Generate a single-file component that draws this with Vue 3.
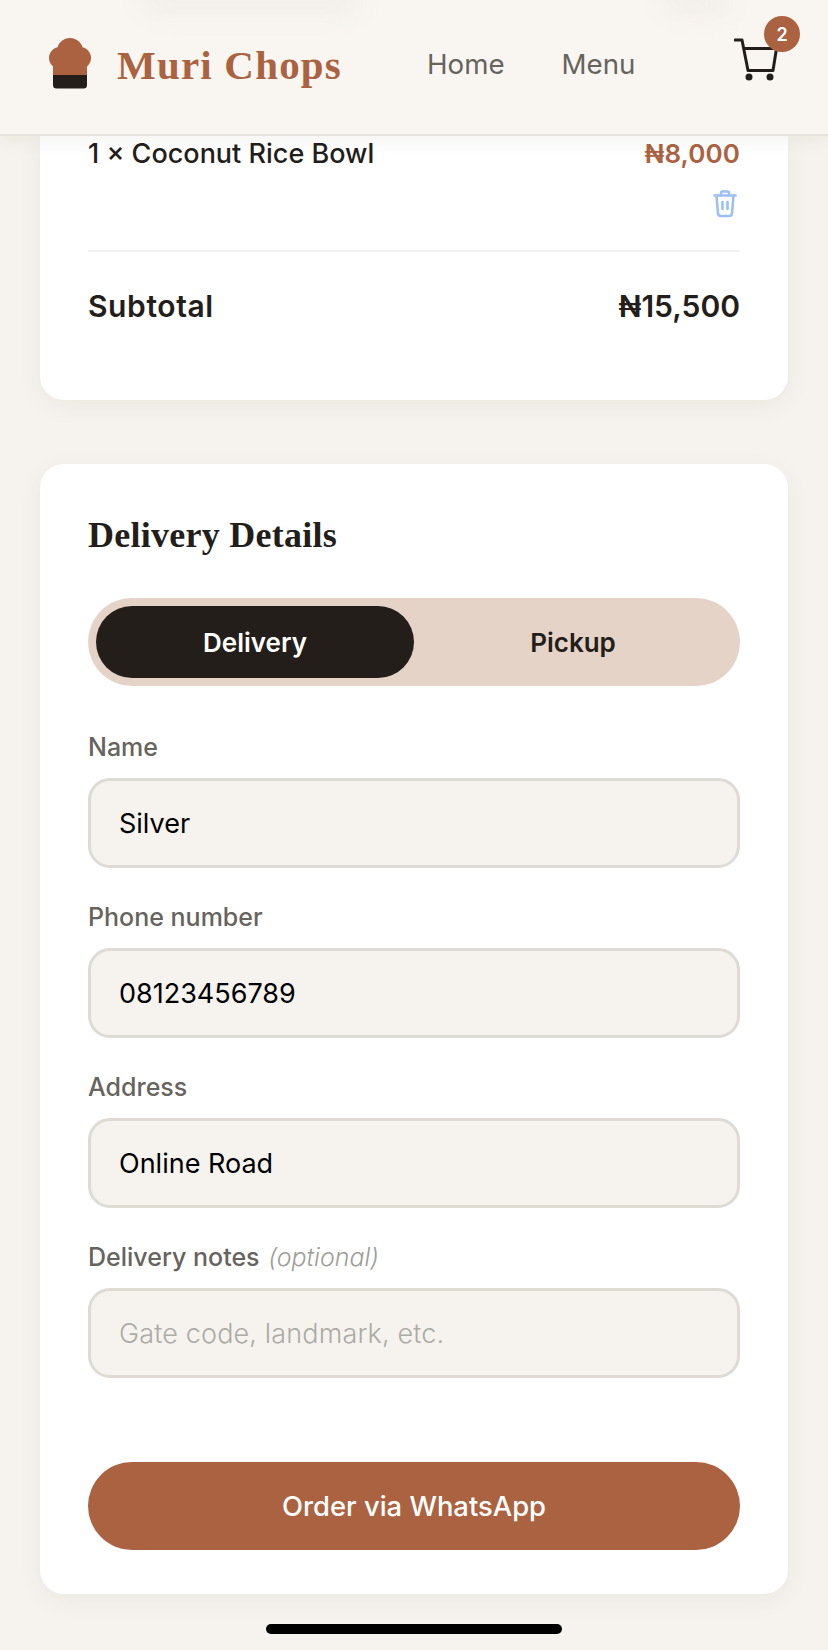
<template>
  <div class="page">
    <header class="topbar">
      <span class="smudge smudge-a"></span>
      <span class="smudge smudge-b"></span>
      <div class="brand">
        <svg class="logo" width="42" height="52" viewBox="0 0 42 52">
          <circle cx="21" cy="14" r="13" fill="#ab6240" />
          <circle cx="11" cy="21" r="11" fill="#ab6240" />
          <circle cx="31" cy="21" r="11" fill="#ab6240" />
          <rect x="4" y="20" width="34" height="20" fill="#ab6240" />
          <path d="M4 38h34v10a3.500 3.500 0 0 1-3.500 3.500h-27A3.500 3.500 0 0 1 4 48z" fill="#231e1a" />
        </svg>
        <span class="brand-name">Muri Chops</span>
      </div>
      <nav class="nav">
        <a>Home</a>
        <a>Menu</a>
      </nav>
      <div class="cart">
        <svg width="44" height="44" viewBox="0 0 44 44" fill="none">
          <path d="M1 2h7l6 30.500h25l3.500-22H10" stroke="#231e1a" stroke-width="3" stroke-linejoin="round" stroke-linecap="round" />
          <circle cx="15" cy="39" r="3.500" fill="#231e1a" />
          <circle cx="36" cy="39" r="3.500" fill="#231e1a" />
        </svg>
        <span class="badge">2</span>
      </div>
    </header>

    <main class="content">
      <section class="card summary">
        <div class="item">
          <span class="item-name">1 × Coconut Rice Bowl</span>
          <div class="item-side">
            <span class="item-price">₦8,000</span>
            <svg class="trash" width="24" height="28" viewBox="0 0 24 28" fill="none" stroke="#9cc0f2" stroke-width="2.600" stroke-linecap="round" stroke-linejoin="round">
              <path d="M1.500 5.500h21" />
              <path d="M8 5.500V3a1.500 1.500 0 0 1 1.500-1.500h5A1.500 1.500 0 0 1 16 3v2.500" />
              <path d="M3.500 5.500l1.500 18a3 3 0 0 0 3 2.500h8a3 3 0 0 0 3-2.500l1.500-18" />
              <path d="M9.500 12v7M14.500 12v7" />
            </svg>
          </div>
        </div>
        <div class="subtotal">
          <span class="subtotal-label">Subtotal</span>
          <span>₦15,500</span>
        </div>
      </section>

      <section class="card details">
        <h2>Delivery Details</h2>
        <div class="toggle">
          <button class="active">Delivery</button>
          <button>Pickup</button>
        </div>
        <div class="field" v-for="f in fields" :key="f.label">
          <label>{{ f.label }} <em v-if="f.optional">(optional)</em></label>
          <input :value="f.value" :placeholder="f.placeholder" readonly />
        </div>
        <button class="order">Order via WhatsApp</button>
      </section>
    </main>

    <div class="home-bar"></div>
  </div>
</template>

<script setup>
const fields = [
  { label: "Name", value: "Silver" },
  { label: "Phone number", value: "08123456789" },
  { label: "Address", value: "Online Road" },
  { label: "Delivery notes", value: "", optional: true, placeholder: "Gate code, landmark, etc." },
];
</script>

<style>
html, body {
  margin: 0;
  background: #f6f3ee;
}
</style>

<style scoped>
.page {
  position: relative;
  width: 828px;
  height: 1650px;
  overflow: hidden;
  background: #f6f3ee;
  font-family: Inter, "Open Sans", sans-serif;
  color: #231e1a;
}
.topbar {
  position: relative;
  z-index: 2;
  height: 134px;
  display: flex;
  align-items: center;
  padding: 0 50px 0 49px;
  background: #f9f6f2;
  border-bottom: 2px solid #e6e3de;
  box-shadow: 0 6px 16px rgba(60, 40, 20, 0.05);
}
.smudge {
  position: absolute;
  top: -16px;
  height: 30px;
  border-radius: 20px;
  background: #f1ede7;
  filter: blur(12px);
}
.smudge-a {
  left: 140px;
  width: 220px;
}
.smudge-b {
  left: 660px;
  width: 70px;
}
.brand {
  display: flex;
  align-items: center;
  gap: 26px;
  width: 378px;
}
.logo {
  margin-top: -8px;
}
.brand-name {
  font-family: "Liberation Serif", serif;
  font-weight: 700;
  font-size: 41px;
  letter-spacing: 1.2px;
  color: #ab6240;
  margin-top: -4px;
}
.nav {
  display: flex;
  gap: 57px;
  font-size: 27.700px;
  font-weight: 400;
  color: #67635d;
  margin-top: -7px;
}
.cart {
  position: relative;
  margin-left: auto;
  width: 44px;
  height: 44px;
  top: -7px;
}
.cart svg {
  display: block;
}
.badge {
  position: absolute;
  top: -22px;
  left: 30px;
  width: 36px;
  height: 36px;
  border-radius: 50%;
  background: #ab6240;
  color: #fff;
  font-size: 18px;
  font-weight: 600;
  display: flex;
  align-items: center;
  justify-content: center;
}
.content {
  display: flex;
  flex-direction: column;
  gap: 64px;
  padding: 0 40px;
}
.card {
  background: #fff;
  border-radius: 24px;
  padding: 0 48px;
  box-shadow: 0 6px 24px rgba(60, 40, 20, 0.06);
}
.summary {
  height: 264px;
  box-sizing: border-box;
  border-radius: 0 0 24px 24px;
}
.item {
  display: flex;
  justify-content: space-between;
  height: 114px;
  border-bottom: 2px solid #f2f1ef;
}
.item-name {
  font-size: 27px;
  font-weight: 500;
  line-height: 36px;
}
.item-side {
  display: flex;
  flex-direction: column;
  align-items: flex-end;
}
.item-price {
  font-size: 26px;
  font-weight: 600;
  line-height: 36px;
  letter-spacing: 0.1px;
  color: #ab6240;
}
.trash {
  margin-top: 18px;
  margin-right: 3px;
}
.subtotal {
  display: flex;
  justify-content: space-between;
  align-items: center;
  margin-top: 34px;
  height: 40px;
  font-size: 30px;
  font-weight: 600;
}
.subtotal-label {
  letter-spacing: 0.6px;
}
.details {
  height: 1130px;
  box-sizing: border-box;
  padding-top: 50px;
}
h2 {
  margin: 0;
  font-family: "Liberation Serif", serif;
  font-weight: 700;
  font-size: 36px;
  line-height: 42px;
  letter-spacing: 0.25px;
}
.toggle {
  display: grid;
  grid-template-columns: 1fr 1fr;
  margin-top: 42px;
  padding: 8px;
  height: 88px;
  box-sizing: border-box;
  border-radius: 44px;
  background: #e5d3c8;
}
.toggle button {
  border: none;
  background: none;
  border-radius: 36px;
  font-family: inherit;
  font-size: 26px;
  font-weight: 600;
  color: #231e1a;
}
.toggle .active {
  background: #231e1a;
  color: #fff;
}
.field {
  margin-top: 31px;
}
.toggle + .field {
  margin-top: 43px;
}
.field label {
  display: block;
  height: 36px;
  line-height: 36px;
  font-size: 25px;
  font-weight: 500;
  color: #67635d;
  margin-bottom: 13px;
}
.field em {
  margin-left: 2px;
  font-weight: 300;
  color: #a09d98;
}
.field input {
  display: block;
  width: 100%;
  height: 90px;
  box-sizing: border-box;
  padding: 0 28px;
  border: 3px solid #dedbd5;
  border-radius: 22px;
  background: #f6f3ee;
  font-family: inherit;
  font-size: 27px;
  color: #000;
  outline: none;
}
.field input::placeholder {
  color: #adaba6;
  font-weight: 300;
  letter-spacing: 0.15px;
}
.order {
  display: block;
  width: 100%;
  height: 88px;
  margin-top: 84px;
  border: none;
  border-radius: 44px;
  background: #ab6240;
  color: #fff;
  font-family: inherit;
  font-size: 27.400px;
  font-weight: 500;
}
.home-bar {
  position: absolute;
  left: 266px;
  bottom: 16px;
  width: 296px;
  height: 10px;
  border-radius: 5px;
  background: #000;
}
</style>
